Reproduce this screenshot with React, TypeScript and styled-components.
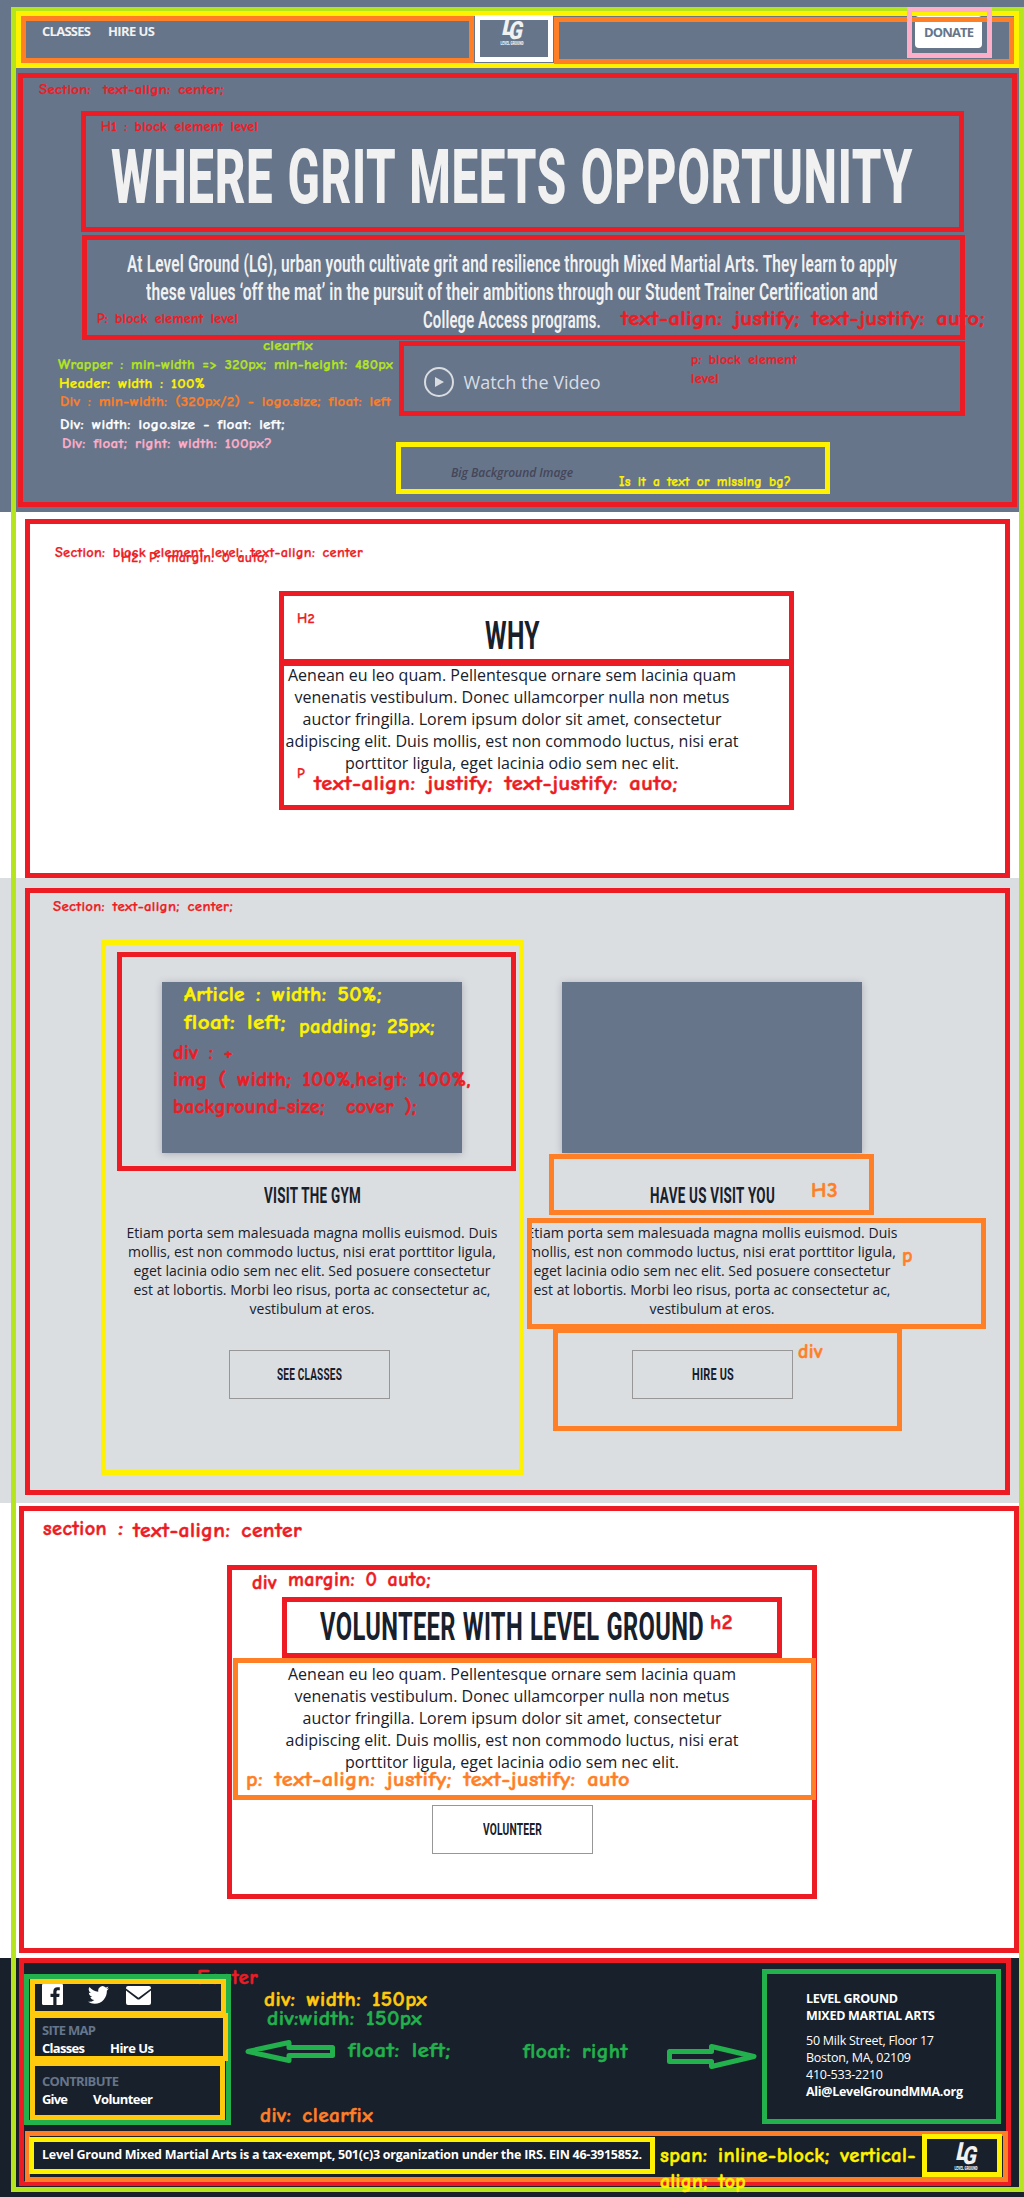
import React, { useLayoutEffect, useRef, useState } from "react";
import styled, { createGlobalStyle } from "styled-components";

const color = {
  slate: "#66758a",
  ink: "#18202b",
  mist: "#dadee1",
  red: "#ed1c24",
  yellow: "#fff200",
  gold: "#ffc90e",
  orange: "#ff7f27",
  green: "#22b14c",
  lime: "#b5e61d",
  pink: "#ffaec9",
  white: "#ffffff",
};

const display = `Roboto, "Liberation Sans", sans-serif`;
const body = `"Open Sans", "Noto Sans", sans-serif`;
const hand = `"Comic Sans MS", "Comic Neue", Lato, sans-serif`;

const GlobalStyle = createGlobalStyle`
  *, *::before, *::after { box-sizing: border-box; }
  body { margin: 0; background: #fff; font-family: ${body}; color: ${color.ink}; }
  h1, h2, h3, p { margin: 0; font-weight: inherit; }
`;

/* ---------- text set to an exact measure ---------- */

const Measure = styled.span<{ $w: number }>`
  display: block;
  width: ${(p) => p.$w}px;
  white-space: pre;
`;
const Run = styled.span`
  display: inline-block;
  transform-origin: 0 50%;
`;

/* Sets one line to a given width, by condensing the glyphs or by tracking. */
function Fit({ w, condense, children }: { w: number; condense?: boolean; children: string }) {
  const ref = useRef<HTMLSpanElement>(null);
  const [style, setStyle] = useState<React.CSSProperties>({});
  useLayoutEffect(() => {
    const natural = ref.current!.getBoundingClientRect().width;
    if (condense) setStyle({ transform: `scaleX(${w / natural})` });
    else if (children.length > 1) setStyle({ letterSpacing: (w - natural) / (children.length - 1) });
  }, []);
  return (
    <Measure $w={w}>
      <Run ref={ref} style={style}>{children}</Run>
    </Measure>
  );
}

/* ---------- site ---------- */

const Page = styled.div`
  position: relative;
  width: 1024px;
  height: 2197px;
  overflow: hidden;
`;

const Hero = styled.section`
  height: 512px;
  background: ${color.slate};
  color: #f1f1f1;
  display: flex;
  flex-direction: column;
  align-items: center;
`;
const Header = styled.header`
  width: 100%;
  height: 68px;
  padding: 0 42px;
  display: grid;
  grid-template-columns: 1fr 44px 1fr;
  align-items: start;
`;
const Nav = styled.nav`
  display: flex;
  gap: 17px;
  padding-top: 21px;
  font: 700 13px/20px ${body};
`;
const Donate = styled.button`
  justify-self: end;
  margin-top: 16px;
  width: 67px;
  height: 32px;
  padding: 0 0 0 9px;
  border: 0;
  border-radius: 4px;
  background: #fff;
  color: ${color.slate};
  text-align: left;
  font: 700 13px/32px ${body};
`;
const LogoBox = styled.div<{ $top?: number }>`
  width: 44px;
  height: 34px;
  margin-top: ${(p) => p.$top ?? 0}px;
  & > svg { display: block; overflow: visible; }
`;
const Title = styled.h1`
  margin-top: 69px;
  font: 800 76px/80px ${display};
  letter-spacing: 0.015em;
  word-spacing: 0.03em;
`;
const Lines = styled.div`
  display: flex;
  flex-direction: column;
  align-items: center;
`;
const Lead = styled(Lines)`
  margin-top: 34px;
  font: 600 23px/28px ${display};
  letter-spacing: 0.01em;
`;
const Watch = styled.div`
  margin-top: 32px;
  display: flex;
  align-items: center;
  gap: 10px;
  height: 30px;
  color: #d9dde2;
  font: 400 18px/30px ${body};
`;
const Caption = styled.p`
  margin-top: 66px;
  color: #454659;
  font: italic 600 12px/20px ${body};
`;

const Block = styled.section<{ $h: number; $bodyGap: number }>`
  height: ${(p) => p.$h}px;
  padding-top: 104px;
  background: #fff;
  display: flex;
  flex-direction: column;
  align-items: center;
  & > ${Lines} { margin-top: ${(p) => p.$bodyGap}px; font: 400 16px/22px ${body}; }
`;
const Heading = styled.h2`
  font: 700 38px/40px ${display};
  letter-spacing: 0.015em;
  word-spacing: 0.03em;
`;
const Button = styled.button<{ $shift?: number }>`
  width: 161px;
  height: 49px;
  margin-top: 32px;
  margin-left: ${(p) => p.$shift ?? 0}px;
  padding: 0;
  border: 1px solid #979797;
  background: transparent;
  color: ${color.ink};
  display: flex;
  align-items: center;
  justify-content: center;
  font: 700 16.5px/20px ${display};
  letter-spacing: 0.02em;
`;

const Visits = styled.section`
  height: 625px;
  padding: 104px 112px 0;
  background: ${color.mist};
  display: grid;
  grid-template-columns: 400px 400px;
`;
const Article = styled.article`
  display: flex;
  flex-direction: column;
  align-items: center;
  & > ${Lines} { margin-top: 16px; font: 400 14px/19.05px ${body}; }
`;
const Picture = styled.div`
  width: 300px;
  height: 171px;
  background: ${color.slate};
  box-shadow: 0 1px 7px rgba(70, 60, 80, 0.3);
`;
const SubHeading = styled.h3`
  margin-top: 30px;
  font: 700 22.5px/24px ${display};
  letter-spacing: 0.02em;
`;

const Footer = styled.footer`
  height: 239px;
  padding: 26px 42px 0;
  background: ${color.ink};
  color: #fff;
`;
const FooterTop = styled.div`
  display: flex;
  justify-content: space-between;
  height: 124px;
`;
const Social = styled.div`
  display: flex;
  height: 21px;
  margin-bottom: 16px;
  align-items: flex-start;
`;
const Icon = styled.svg<{ $ml?: number; $mt?: number }>`
  display: block;
  fill: #fff;
  margin: ${(p) => p.$mt ?? 0}px 0 0 ${(p) => p.$ml ?? 0}px;
`;
const LinkGroup = styled.div`
  margin-bottom: 15px;
  font: 700 13px/18px ${body};
`;
const GroupTitle = styled.div`
  color: ${color.slate};
`;
const Links = styled.div<{ $gap: number }>`
  display: flex;
  gap: ${(p) => p.$gap}px;
`;
const Address = styled.address`
  width: 176px;
  padding-top: 6px;
  font: normal 400 12.5px/17px ${body};
`;
const Strong = styled.div<{ $gap?: number }>`
  font-weight: 700;
  margin-bottom: ${(p) => p.$gap ?? 0}px;
`;
const FooterBottom = styled.div`
  margin: 31px -6px 0 0;
  display: flex;
  justify-content: space-between;
`;
const Legal = styled.p`
  padding-top: 7px;
  font: 700 12.5px/18px ${body};
`;

function Logo({ top }: { top?: number }) {
  return (
    <LogoBox $top={top}>
      <svg width="44" height="34" viewBox="0 0 44 34" fill="#f1f1f1">
        <g fontFamily="Roboto, sans-serif" fontWeight="900">
          <text transform="translate(11 21) skewX(-12)" fontSize="25" textLength="12" lengthAdjust="spacingAndGlyphs">L</text>
          <text transform="translate(17.5 25) skewX(-12)" fontSize="25" textLength="14" lengthAdjust="spacingAndGlyphs">G</text>
          <text x="10.5" y="31" fontSize="5.4" textLength="23" lengthAdjust="spacingAndGlyphs">LEVEL GROUND</text>
        </g>
      </svg>
    </LogoBox>
  );
}

type TextLine = [string, number];
const aenean: TextLine[] = [
  ["Aenean eu leo quam. Pellentesque ornare sem lacinia quam", 448],
  ["venenatis vestibulum. Donec ullamcorper nulla non metus", 435],
  ["auctor fringilla. Lorem ipsum dolor sit amet, consectetur", 419],
  ["adipiscing elit. Duis mollis, est non commodo luctus, nisi erat", 453],
  ["porttitor ligula, eget lacinia odio sem nec elit.", 334],
];
const etiam: TextLine[] = [
  ["Etiam porta sem malesuada magna mollis euismod. Duis", 371],
  ["mollis, est non commodo luctus, nisi erat porttitor ligula,", 368],
  ["eget lacinia odio sem nec elit. Sed posuere consectetur", 357],
  ["est at lobortis. Morbi leo risus, porta ac consectetur ac,", 357],
  ["vestibulum at eros.", 125],
];
const lead: TextLine[] = [
  ["At Level Ground (LG), urban youth cultivate grit and resilience through Mixed Martial Arts. They learn to apply", 770],
  ["these values ‘off the mat’ in the pursuit of their ambitions through our Student Trainer Certification and", 732],
  ["College Access programs.", 178],
];
const fitAll = (lines: TextLine[], condense?: boolean) =>
  lines.map(([t, w]) => <Fit key={t} w={w} condense={condense}>{t}</Fit>);

/* ---------- markup notes over the page ---------- */

const Overlay = styled.div`
  position: absolute;
  inset: 0;
  pointer-events: none;
`;
const Frame = styled.div<{ $x: number; $y: number; $r: number; $b: number; $c: string }>`
  position: absolute;
  left: ${(p) => p.$x}px;
  top: ${(p) => p.$y}px;
  width: ${(p) => p.$r - p.$x}px;
  height: ${(p) => p.$b - p.$y}px;
  border: 5px solid ${(p) => p.$c};
`;
const Note = styled.div<{ $x: number; $base: number; $size: number; $c: string }>`
  position: absolute;
  left: ${(p) => p.$x}px;
  top: ${(p) => p.$base + 1 - 0.987 * p.$size}px;
  color: ${(p) => p.$c};
  font: 700 ${(p) => p.$size}px/1.2 ${hand};
  -webkit-text-stroke: ${(p) => (p.$size > 16 ? 0.5 : 0.25)}px ${(p) => p.$c};
  letter-spacing: 0.02em;
  word-spacing: 0.14em;
`;
const Arrow = styled.svg<{ $x: number; $y: number }>`
  position: absolute;
  left: ${(p) => p.$x}px;
  top: ${(p) => p.$y}px;
  fill: none;
  stroke: ${color.green};
  stroke-width: 5;
  stroke-linejoin: round;
`;

type FrameData = [number, number, number, number, string];
const frames: FrameData[] = [
  [11, 7, 1024, 2192, color.lime],
  [16, 11, 1019, 68, color.yellow],
  [21, 16, 474, 63, color.orange],
  [475, 15, 553, 62, color.white],
  [554, 17, 1014, 64, color.orange],
  [907, 7, 992, 58, color.pink],
  [18, 73, 1017, 507, color.red],
  [81, 111, 964, 232, color.red],
  [82, 235, 965, 340, color.red],
  [399, 341, 965, 416, color.red],
  [396, 442, 830, 494, color.yellow],
  [25, 519, 1010, 878, color.red],
  [279, 591, 794, 664, color.red],
  [279, 661, 794, 810, color.red],
  [25, 888, 1010, 1495, color.red],
  [101, 940, 524, 1475, color.yellow],
  [117, 952, 516, 1171, color.red],
  [549, 1154, 874, 1215, color.orange],
  [553, 1328, 902, 1431, color.orange],
  [527, 1218, 986, 1329, color.orange],
  [19, 1506, 1019, 1953, color.red],
  [227, 1565, 817, 1899, color.red],
  [282, 1597, 782, 1658, color.red],
  [233, 1658, 816, 1800, color.orange],
  [19, 1958, 1011, 2186, color.red],
  [24, 1974, 231, 2125, color.green],
  [30, 1979, 226, 2016, color.gold],
  [30, 2013, 228, 2061, color.gold],
  [30, 2061, 225, 2120, color.gold],
  [762, 1969, 1001, 2124, color.green],
  [25, 2131, 1008, 2182, color.orange],
  [29, 2137, 655, 2174, color.yellow],
  [922, 2134, 1002, 2177, color.yellow],
];

type NoteData = [string, number, number, number, string, number];
const S = 13.5;
const L = 20;
const notes: NoteData[] = [
  ["Section:", 39, 94, 52, color.red, S],
  ["text-align: center;", 103, 94, 121, color.red, S],
  ["H1 : block element level", 101, 131, 157, color.red, S],
  ["P: block element level", 97, 323, 141, color.red, S],
  ["text-align: justify; text-justify: auto;", 621, 325.7, 364, color.red, L],
  ["clearfix", 263, 350, 50, color.lime, S],
  ["Wrapper : min-width => 320px; min-height: 480px", 58, 369, 335, color.lime, S],
  ["Header: width : 100%", 59, 388, 146, color.yellow, S],
  ["Div : min-width: (320px/2) - logo.size; float: left", 60, 406, 331, color.orange, S],
  ["Div: width: logo.size - float: left;", 60, 429, 225, color.white, S],
  ["Div: float; right: width: 100px?", 62, 448, 210, color.pink, S],
  ["p: block element", 691, 364, 106, color.red, S],
  ["level", 691, 383, 28, color.red, S],
  ["Is it a text or missing bg?", 619, 486, 172, color.yellow, S],
  ["Section: block element level; text-align: center", 55, 557, 308, color.red, S],
  ["H2, P: margin: 0 auto;", 121, 562, 147, color.red, S],
  ["H2", 297, 623, 18, color.red, S],
  ["P", 297, 778, 8, color.red, S],
  ["text-align: justify; text-justify: auto;", 314, 790.5, 364, color.red, L],
  ["Section: text-align; center;", 53, 911, 180, color.red, S],
  ["Article : width: 50%;", 184, 1002, 198, color.yellow, L],
  ["float: left;", 184, 1029.7, 102, color.yellow, L],
  ["padding; 25px;", 299, 1033.6, 136, color.yellow, L],
  ["div : +", 173, 1060, 60, color.red, L],
  ["img ( width; 100%,heigt: 100%,", 173, 1087, 298, color.red, L],
  ["background-size;  cover );", 173, 1114, 244, color.red, L],
  ["H3", 811, 1198, 27, color.orange, L],
  ["p", 902, 1263, 11, color.orange, L],
  ["div", 798, 1359, 25, color.orange, L],
  ["section", 43, 1535.7, 64, color.red, L],
  [":", 118, 1536, 6, color.red, L],
  ["text-align: center", 133, 1537.7, 169, color.red, L],
  ["div", 252, 1590, 25, color.red, L],
  ["margin: 0 auto;", 288, 1586.7, 143, color.red, L],
  ["h2", 710, 1630, 23, color.red, L],
  ["p: text-align: justify; text-justify: auto", 246, 1786.7, 384, color.orange, L],
  ["div: width: 150px", 264, 2006.7, 163, color.gold, L],
  ["div:width: 150px", 267, 2026, 155, color.green, L],
  ["float: left;", 348, 2057.7, 103, color.green, L],
  ["float: right", 523, 2059, 105, color.green, L],
  ["div: clearfix", 260, 2122.7, 113, color.orange, L],
  ["span: inline-block; vertical-", 660, 2162.7, 256, color.yellow, L],
  ["align; top", 660, 2189, 86, color.yellow, L],
];

export default function App() {
  return (
    <Page>
      <GlobalStyle />
      <Hero>
        <Header>
          <Nav>
            <Fit w={49}>CLASSES</Fit>
            <Fit w={47}>HIRE US</Fit>
          </Nav>
          <Logo top={14} />
          <Donate><Fit w={50}>DONATE</Fit></Donate>
        </Header>
        <Title><Fit w={802} condense>WHERE GRIT MEETS OPPORTUNITY</Fit></Title>
        <Lead>{fitAll(lead, true)}</Lead>
        <Watch>
          <svg width="30" height="30" viewBox="0 0 30 30">
            <circle cx="15" cy="15" r="14" fill="none" stroke="currentColor" strokeWidth="2" />
            <path d="M11 10v10l9-5z" fill="currentColor" />
          </svg>
          <Fit w={137}>Watch the Video</Fit>
        </Watch>
        <Caption><Fit w={122}>Big Background Image</Fit></Caption>
      </Hero>

      <Block $h={366} $bodyGap={8}>
        <Heading><Fit w={55} condense>WHY</Fit></Heading>
        <Lines>{fitAll(aenean)}</Lines>
      </Block>

      <Visits>
        <Article>
          <Picture />
          <SubHeading><Fit w={97} condense>VISIT THE GYM</Fit></SubHeading>
          <Lines>{fitAll(etiam)}</Lines>
          <Button $shift={-5}><Fit w={65} condense>SEE CLASSES</Fit></Button>
        </Article>
        <Article>
          <Picture />
          <SubHeading><Fit w={125} condense>HAVE US VISIT YOU</Fit></SubHeading>
          <Lines>{fitAll(etiam)}</Lines>
          <Button $shift={1}><Fit w={42} condense>HIRE US</Fit></Button>
        </Article>
      </Visits>

      <Block $h={455} $bodyGap={16}>
        <Heading><Fit w={384} condense>VOLUNTEER WITH LEVEL GROUND</Fit></Heading>
        <Lines>{fitAll(aenean)}</Lines>
        <Button $shift={1}><Fit w={59} condense>VOLUNTEER</Fit></Button>
      </Block>

      <Footer>
        <FooterTop>
          <div>
            <Social>
              <Icon width="21" height="21" viewBox="0 0 21 21">
                <path d="M1.2 0h18.6C20.500 0 21 .5 21 1.200v18.600c0 .7-.5 1.200-1.200 1.200h-5.300v-8.100h2.700l.4-3.200h-3.100v-2c0-.9.300-1.500 1.600-1.500h1.700V3.300c-.3 0-1.300-.1-2.400-.1-2.400 0-4.100 1.500-4.100 4.200v2.300H8.500v3.200h2.800V21H1.200C.5 21 0 20.500 0 19.800V1.200C0 .5.5 0 1.200 0z" />
              </Icon>
              <Icon width="21" height="18" viewBox="0 2 24 20" $ml={25} $mt={2} preserveAspectRatio="none">
                <path d="M23.950 4.570a10 10 0 0 1-2.820.770 4.960 4.960 0 0 0 2.160-2.720c-.95.550-2 .950-3.130 1.180a4.920 4.920 0 0 0-8.380 4.480C7.690 8.090 4.070 6.130 1.640 3.160a4.920 4.920 0 0 0 1.520 6.570 4.900 4.900 0 0 1-2.230-.61v.06c0 2.390 1.700 4.380 3.950 4.830a5 5 0 0 1-2.210.080 4.940 4.940 0 0 0 4.600 3.420A9.870 9.870 0 0 1 0 19.540a14 14 0 0 0 7.550 2.210c9.050 0 14-7.500 14-13.980 0-.21 0-.42-.02-.63a9.940 9.940 0 0 0 2.420-2.570z" />
              </Icon>
              <Icon width="25" height="19" viewBox="0 0 25 19" $ml={17} $mt={2}>
                <path d="M2 0h21q2 0 2 2v.5L12.500 11.800 0 2.500V2q0-2 2-2zM0 4.500l11.300 8.700q1.200.8 2.400 0L25 4.500V17q0 2-2 2H2q-2 0-2-2z" />
              </Icon>
            </Social>
            <LinkGroup>
              <GroupTitle><Fit w={54}>SITE MAP</Fit></GroupTitle>
              <Links $gap={25}>
                <Fit w={43}>Classes</Fit>
                <Fit w={44}>Hire Us</Fit>
              </Links>
            </LinkGroup>
            <LinkGroup>
              <GroupTitle><Fit w={77}>CONTRIBUTE</Fit></GroupTitle>
              <Links $gap={25}>
                <Fit w={26}>Give</Fit>
                <Fit w={60}>Volunteer</Fit>
              </Links>
            </LinkGroup>
          </div>
          <Address>
            <Strong><Fit w={92}>LEVEL GROUND</Fit></Strong>
            <Strong $gap={8}><Fit w={129}>MIXED MARTIAL ARTS</Fit></Strong>
            <Fit w={128}>50 Milk Street, Floor 17</Fit>
            <Fit w={105}>Boston, MA, 02109</Fit>
            <Fit w={77}>410-533-2210</Fit>
            <Strong><Fit w={157}>Ali@LevelGroundMMA.org</Fit></Strong>
          </Address>
        </FooterTop>
        <FooterBottom>
          <Legal>
            <Fit w={600}>Level Ground Mixed Martial Arts is a tax-exempt, 501(c)3 organization under the IRS. EIN 46-3915852.</Fit>
          </Legal>
          <Logo />
        </FooterBottom>
      </Footer>

      <Overlay>
        <Note $x={197} $base={1984.3} $size={L} $c={color.red}><Fit w={61} condense>Footer</Fit></Note>
        {frames.map(([x, y, r, b, c], i) => (
          <Frame key={i} $x={x} $y={y} $r={r} $b={b} $c={c} />
        ))}
        {notes.map(([t, x, base, w, c, size], i) => (
          <Note key={i} $x={x} $base={base} $size={size} $c={c}><Fit w={w} condense>{t}</Fit></Note>
        ))}
        <Arrow $x={244} $y={2038} width="92" height="28" viewBox="0 0 92 28">
          <path d="M4 13.500L45 4.500V9.500H88.500V17.500H45V22.500z" />
        </Arrow>
        <Arrow $x={666} $y={2042} width="92" height="30" viewBox="0 0 92 30">
          <path d="M88 14.500L45.500 24.500V19.500H3.500V9.500H45.500V4.500z" />
        </Arrow>
      </Overlay>
    </Page>
  );
}
